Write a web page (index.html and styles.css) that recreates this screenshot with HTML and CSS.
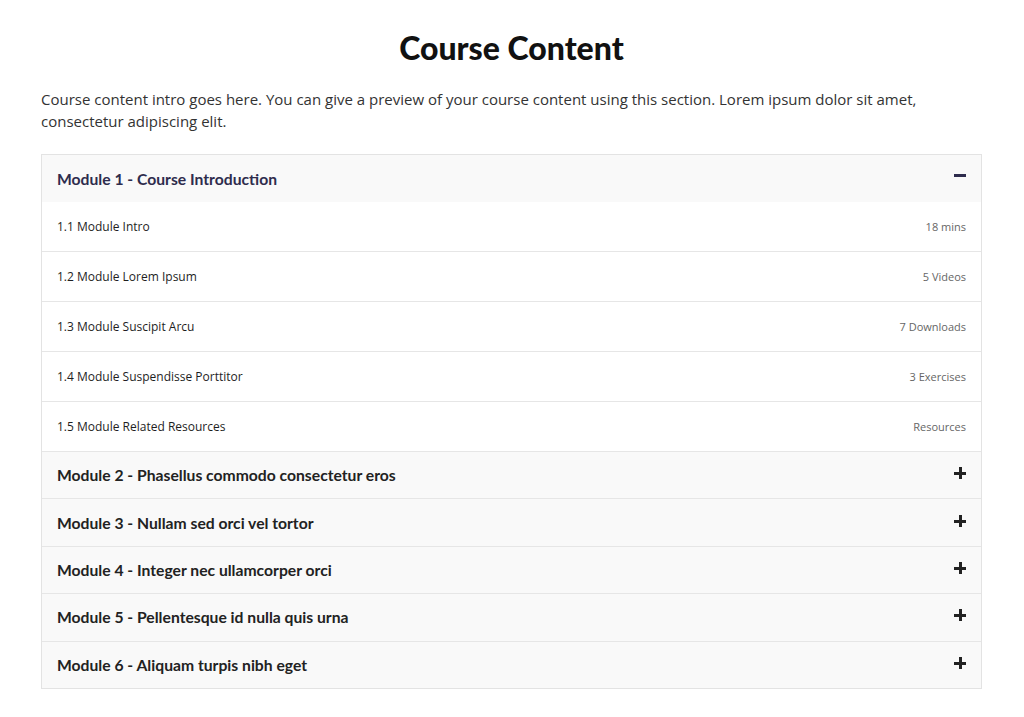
FILE: index.html
```html
<!DOCTYPE html>
<html lang="en">
<head>
<meta charset="utf-8">
<title>Course Content</title>
<link rel="stylesheet" href="styles.css">
</head>
<body>
<main class="page">
  <h1 class="title">Course Content</h1>
  <p class="intro">Course content intro goes here. You can give a preview of your course content using this section. Lorem ipsum dolor sit amet, consectetur adipiscing elit.</p>
  <div class="accordion">
    <section class="module open">
      <div class="module-head">
        <span class="module-title">Module 1 - Course Introduction</span>
        <span class="toggle minus"></span>
      </div>
      <ul class="items">
        <li class="item"><span class="item-name">1.1 Module Intro</span><span class="item-meta">18 mins</span></li>
        <li class="item"><span class="item-name">1.2 Module Lorem Ipsum</span><span class="item-meta">5 Videos</span></li>
        <li class="item"><span class="item-name">1.3 Module Suscipit Arcu</span><span class="item-meta">7 Downloads</span></li>
        <li class="item"><span class="item-name">1.4 Module Suspendisse Porttitor</span><span class="item-meta">3 Exercises</span></li>
        <li class="item"><span class="item-name">1.5 Module Related Resources</span><span class="item-meta">Resources</span></li>
      </ul>
    </section>
    <section class="module">
      <div class="module-head"><span class="module-title">Module 2 - Phasellus commodo consectetur eros</span><span class="toggle plus"></span></div>
    </section>
    <section class="module">
      <div class="module-head"><span class="module-title">Module 3 - Nullam sed orci vel tortor</span><span class="toggle plus"></span></div>
    </section>
    <section class="module">
      <div class="module-head"><span class="module-title">Module 4 - Integer nec ullamcorper orci</span><span class="toggle plus"></span></div>
    </section>
    <section class="module">
      <div class="module-head"><span class="module-title">Module 5 - Pellentesque id nulla quis urna</span><span class="toggle plus"></span></div>
    </section>
    <section class="module">
      <div class="module-head"><span class="module-title">Module 6 - Aliquam turpis nibh eget</span><span class="toggle plus"></span></div>
    </section>
  </div>
</main>
</body>
</html>
```
FILE: styles.css
```css
* { box-sizing: border-box; }
html, body { margin: 0; padding: 0; background: #fff; }
body { font-family: "Open Sans", "Liberation Sans", sans-serif; color: #222; }

.page {
  padding: 30px 42px 28px 41px;
  display: flex;
  flex-direction: column;
}

.title {
  margin: 0;
  text-align: center;
  font-family: Lato, "Liberation Sans", sans-serif;
  font-weight: 900;
  font-size: 32px;
  line-height: 36px;
  color: #111;
}

.intro {
  margin: 22px 0 22px;
  font-family: "Open Sans", "Liberation Sans", sans-serif;
  font-size: 15px;
  line-height: 22px;
  color: #333;
}

.accordion {
  border: 1px solid #e3e3e3;
}

.module + .module { border-top: 1px solid #e6e6e6; }

.module-head {
  display: flex;
  align-items: center;
  justify-content: space-between;
  height: 46.4px;
  padding: 0 15px;
  background: #f9f9f9;
}
.module.open .module-head { height: 47px; }

.module-title {
  font-family: Lato, "Liberation Sans", sans-serif;
  font-weight: 700;
  font-size: 15.7px;
  color: #222;
}
.module.open .module-title { color: #2e2c4d; }

.toggle {
  position: relative;
  width: 12px;
  height: 12px;
}
.toggle::before, .toggle::after {
  content: "";
  position: absolute;
  background: #222;
}
.toggle::before { left: 0; top: 5px; width: 12px; height: 3px; }
.toggle.plus::after { left: 5px; top: 0; width: 3px; height: 12px; }
.toggle.plus { top: -2px; }
.toggle.minus::before { background: #2e2c4d; top: 1px; }

.items { list-style: none; margin: 0; padding: 0; }
.item {
  display: flex;
  align-items: center;
  justify-content: space-between;
  height: 50px;
  padding: 0 15px;
  background: #fff;
  border-top: 1px solid #e6e6e6;
}
.item:first-child { border-top: 0; height: 49px; }
.item-name {
  font-size: 12px;
  color: #1e1e1e;
}
.item-meta {
  font-size: 11px;
  color: #666;
}
```
